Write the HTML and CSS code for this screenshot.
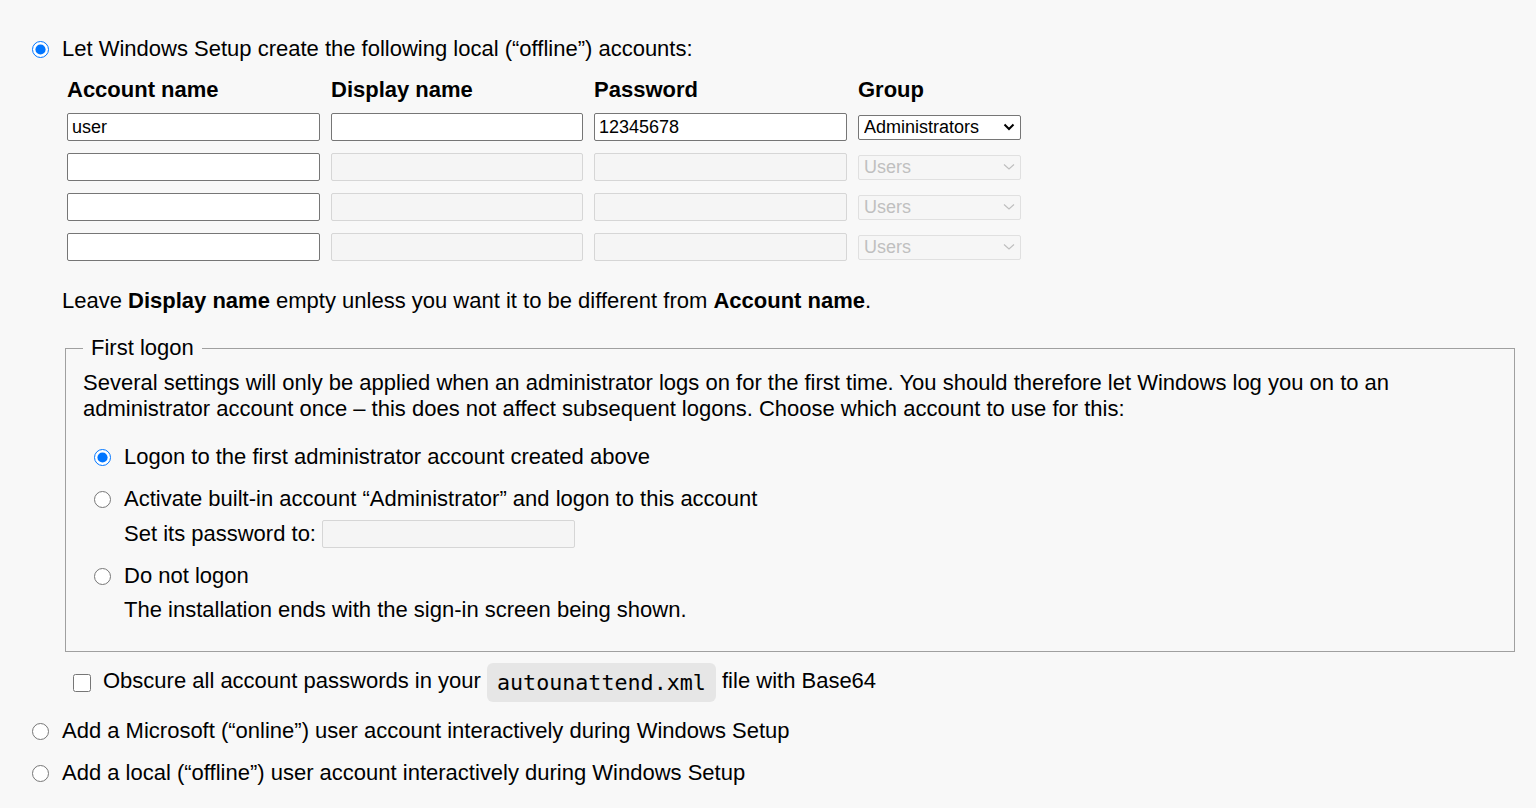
FILE: index.html
```html
<!DOCTYPE html>
<html lang="en">
<head>
<meta charset="utf-8">
<title>User accounts</title>
<link rel="stylesheet" href="styles.css">
</head>
<body>
<div class="page">
  <label class="opt top-opt">
    <input type="radio" name="acct" class="radio" checked>
    <span>Let Windows Setup create the following local (“offline”) accounts:</span>
  </label>

  <div class="accounts">
    <div class="hdr">Account name</div>
    <div class="hdr">Display name</div>
    <div class="hdr">Password</div>
    <div class="hdr">Group</div>

    <input class="txt" type="text" value="user">
    <input class="txt" type="text" value="">
    <input class="txt" type="text" value="12345678">
    <select class="sel"><option>Administrators</option><option>Users</option></select>

    <input class="txt" type="text" value="">
    <input class="txt" type="text" value="" disabled>
    <input class="txt" type="text" value="" disabled>
    <select class="sel" disabled><option>Users</option></select>

    <input class="txt" type="text" value="">
    <input class="txt" type="text" value="" disabled>
    <input class="txt" type="text" value="" disabled>
    <select class="sel" disabled><option>Users</option></select>

    <input class="txt" type="text" value="">
    <input class="txt" type="text" value="" disabled>
    <input class="txt" type="text" value="" disabled>
    <select class="sel" disabled><option>Users</option></select>
  </div>

  <p class="hint">Leave <b>Display name</b> empty unless you want it to be different from <b>Account name</b>.</p>

  <fieldset class="logon">
    <legend>First logon</legend>
    <p class="intro">Several settings will only be applied when an administrator logs on for the first time. You should therefore let Windows log you on to an administrator account once – this does not affect subsequent logons. Choose which account to use for this:</p>

    <label class="opt sub-opt first">
      <input type="radio" name="logon" class="radio" checked>
      <span>Logon to the first administrator account created above</span>
    </label>

    <label class="opt sub-opt">
      <input type="radio" name="logon" class="radio">
      <span>Activate built-in account “Administrator” and logon to this account</span>
    </label>
    <div class="pw-row">
      <span>Set its password to:</span>
      <input class="txt pw" type="text" disabled>
    </div>

    <label class="opt sub-opt third">
      <input type="radio" name="logon" class="radio">
      <span>Do not logon</span>
    </label>
    <div class="note">The installation ends with the sign-in screen being shown.</div>
  </fieldset>

  <label class="check-row">
    <input type="checkbox" class="check">
    <span>Obscure all account passwords in your <code>autounattend.xml</code> file with Base64</span>
  </label>

  <label class="opt bottom-opt">
    <input type="radio" name="acct" class="radio">
    <span>Add a Microsoft (“online”) user account interactively during Windows Setup</span>
  </label>
  <label class="opt bottom-opt">
    <input type="radio" name="acct" class="radio">
    <span>Add a local (“offline”) user account interactively during Windows Setup</span>
  </label>
</div>
</body>
</html>
```

FILE: styles.css
```css
html, body {
  margin: 0;
  background: #f8f8f8;
}

body {
  font-family: "Liberation Sans", Arial, sans-serif;
  font-size: 22px;
  line-height: 26px;
  color: #000;
}

.page {
  padding: 36px 21px 0 30px;
}

.opt {
  display: flex;
  align-items: center;
  gap: 13px;
}

.radio {
  width: 17px;
  height: 17px;
  margin: 0 0 0 2px;
  flex: none;
}

.top-opt {
  height: 26px;
}

.accounts {
  display: grid;
  grid-template-columns: 253px 252px 253px 163px;
  column-gap: 11px;
  row-gap: 12px;
  align-items: center;
  margin: 16px 0 0 37px;
}

.hdr {
  font-weight: bold;
  line-height: 24px;
  margin-bottom: -1px;
}

.txt {
  box-sizing: border-box;
  height: 28px;
  margin: 0;
  padding: 0 4px;
  font-family: "Liberation Sans", Arial, sans-serif;
  font-size: 18px;
  color: #000;
  background: #fff;
  border: 1px solid #767676;
  border-radius: 2px;
}

.txt:disabled {
  background: #f5f5f5;
  border-color: #d6d6d6;
}

.sel {
  appearance: none;
  -webkit-appearance: none;
  box-sizing: border-box;
  height: 25px;
  margin: 0;
  padding: 0 24px 0 5px;
  font-family: "Liberation Sans", Arial, sans-serif;
  font-size: 18px;
  color: #000;
  background-color: #fff;
  background-image: url("data:image/svg+xml;utf8,<svg xmlns='http://www.w3.org/2000/svg' width='12' height='8' viewBox='0 0 12 8'><path d='M1.5 1.5 L6 6 L10.5 1.5' fill='none' stroke='black' stroke-width='2'/></svg>");
  background-repeat: no-repeat;
  background-position: right 5px center;
  border: 1px solid #767676;
  border-radius: 2px;
}

.sel:disabled {
  color: #a8a8a8;
  background-color: #f6f6f6;
  background-image: url("data:image/svg+xml;utf8,<svg xmlns='http://www.w3.org/2000/svg' width='12' height='8' viewBox='0 0 12 8'><path d='M1 1.5 L6 6 L11 1.5' fill='none' stroke='%23a8a8a8' stroke-width='1.2'/></svg>");
  border-color: #d6d6d6;
}

.hint {
  margin: 27px 0 0 32px;
}

.logon {
  margin: 21px 0 0 35px;
  padding: 9px 20px 28px 17px;
  border: 1px solid #a0a0a0;
}

.logon legend {
  padding: 0 8px;
  margin-left: 0;
  line-height: 26px;
}

.intro {
  margin: 0;
  line-height: 26px;
}

.sub-opt {
  margin-left: 9px;
  height: 26px;
}

.sub-opt.first {
  margin-top: 22px;
}

.sub-opt + .pw-row {
  margin-top: 8px;
}

.sub-opt + .sub-opt {
  margin-top: 16px;
}

.pw-row {
  display: flex;
  align-items: center;
  gap: 6px;
  margin-left: 41px;
}

.pw {
  width: 253px;
  height: 28px;
}

.sub-opt.third {
  margin-top: 15px;
}

.note {
  margin: 8px 0 0 41px;
}

.check-row {
  display: flex;
  align-items: center;
  gap: 12px;
  margin: 11px 0 0 43px;
  height: 39px;
}

.check {
  width: 18px;
  height: 18px;
  margin: 0;
  flex: none;
}

code {
  display: inline-block;
  font-family: "DejaVu Sans Mono", monospace;
  font-size: 21.7px;
  line-height: 39px;
  padding: 0 10px;
  background: #e6e6e6;
  border-radius: 6px;
  vertical-align: middle;
}

.bottom-opt {
  height: 26px;
  margin-top: 16px;
}

.bottom-opt + .bottom-opt {
  margin-top: 16px;
}
```
